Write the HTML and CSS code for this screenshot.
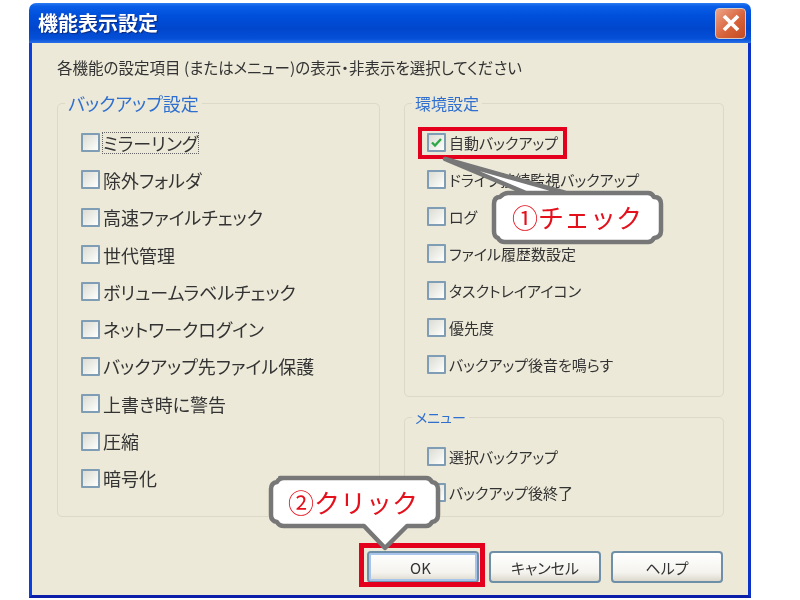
FILE: index.html
```html
<!DOCTYPE html>
<html lang="ja">
<head>
<meta charset="utf-8">
<title>機能表示設定</title>
<link rel="stylesheet" href="styles.css">
</head>
<body>
<div class="page">
  <div class="window">
    <div class="titlebar">
      <span class="title">機能表示設定</span>
      <span class="close"><svg width="20" height="20" viewBox="0 0 20 20"><path d="M3 3L17 17M17 3L3 17" stroke="#fff" stroke-width="3.8" fill="none"/></svg></span>
    </div>
    <div class="content">
      <p class="intro">各機能の設定項目 (またはメニュー)の表示・非表示を選択してください</p>
      <div class="groups">
        <fieldset class="group group-backup">
          <legend>バックアップ設定</legend>
          <div class="row"><span class="box"></span><span class="focus">ミラーリング</span></div>
          <div class="row"><span class="box"></span><span>除外フォルダ</span></div>
          <div class="row"><span class="box"></span><span>高速ファイルチェック</span></div>
          <div class="row"><span class="box"></span><span>世代管理</span></div>
          <div class="row"><span class="box"></span><span>ボリュームラベルチェック</span></div>
          <div class="row"><span class="box"></span><span>ネットワークログイン</span></div>
          <div class="row"><span class="box"></span><span>バックアップ先ファイル保護</span></div>
          <div class="row"><span class="box"></span><span>上書き時に警告</span></div>
          <div class="row"><span class="box"></span><span>圧縮</span></div>
          <div class="row"><span class="box"></span><span>暗号化</span></div>
        </fieldset>
        <div class="side">
          <fieldset class="group group-env">
            <legend>環境設定</legend>
            <div class="row"><span class="box checked"><svg width="15" height="15" viewBox="0 0 15 15"><path d="M3 7.5L6 10.5L12 4" stroke="#2fa84a" stroke-width="2.4" fill="none"/></svg></span><span>自動バックアップ</span></div>
            <div class="row"><span class="box"></span><span>ドライブ接続監視バックアップ</span></div>
            <div class="row"><span class="box"></span><span>ログ</span></div>
            <div class="row"><span class="box"></span><span>ファイル履歴数設定</span></div>
            <div class="row"><span class="box"></span><span>タスクトレイアイコン</span></div>
            <div class="row"><span class="box"></span><span>優先度</span></div>
            <div class="row"><span class="box"></span><span>バックアップ後音を鳴らす</span></div>
          </fieldset>
          <fieldset class="group group-menu">
            <legend>メニュー</legend>
            <div class="row"><span class="box"></span><span>選択バックアップ</span></div>
            <div class="row"><span class="box"></span><span>バックアップ後終了</span></div>
          </fieldset>
        </div>
      </div>
      <div class="buttons">
        <button class="btn btn-default">OK</button>
        <button class="btn">キャンセル</button>
        <button class="btn">ヘルプ</button>
      </div>
    </div>
  </div>
  <div class="mark mark-check"></div>
  <div class="mark mark-ok"></div>
  <svg class="bubbles" width="800" height="600" viewBox="0 0 800 600">
    <path d="M445 159L526 193H648Q652 193 654 197Q661 197 661 204V231Q661 237 654 238Q652 242 648 242H505Q500 242 498 238Q494 237 494 231V204Q494 197 500 197Q504 193 508 193H566L445 159Z" fill="#fff" stroke="#777" stroke-width="4.5" stroke-linejoin="round"/>
    <path d="M280 478H426Q430 478 432 482Q438 483 438 489V515Q438 521 432 522Q430 526 426 526H407L385 548L364 526H284Q279 526 277 522Q271 521 271 515V489Q271 483 277 482Q279 478 284 478Z" fill="#fff" stroke="#777" stroke-width="4.5" stroke-linejoin="round"/>
  </svg>
  <div class="bubble-text bubble-one">①チェック</div>
  <div class="bubble-text bubble-two">②クリック</div>
</div>
</body>
</html>
```
FILE: styles.css
```css
* { box-sizing: border-box; }
html, body { margin: 0; padding: 0; background: #fff; }
body { font-family: "Noto Sans CJK JP", "Liberation Sans", sans-serif; }
.page { position: relative; width: 800px; height: 600px; overflow: hidden; padding: 3px 0 0 29px; }
.window { width: 722px; height: 595px; display: flex; flex-direction: column; filter: blur(0.7px); }
.titlebar {
  height: 40px; flex: none; display: flex; align-items: center; justify-content: space-between;
  padding: 0 5px 0 9px; border-radius: 7px 7px 0 0;
  background: linear-gradient(#2d7cf0 0, #0a5ee8 8%, #0050dc 30%, #0046cc 65%, #0450d8 90%, #2a70e8 100%);
}
.title { color: #fff; font-size: 20px; font-weight: 700; line-height: 26px; text-shadow: 1px 1px 1px #0a2a80; }
.close {
  width: 31px; height: 31px; border-radius: 4px; border: 1px solid #d8c8c0;
  background: linear-gradient(135deg, #eda488, #d8643c 55%, #c24a22);
  display: flex; align-items: center; justify-content: center;
}
.content {
  flex: 1; background: #ece9d8; color: #333;
  border-left: 3px solid #0a3ee0; border-right: 3px solid #0a30c8; border-bottom: 3px solid #0a1ea8;
  padding: 14px 23px 0 25px;
  font-feature-settings: "palt";
}
.intro { margin: 0 0 16px; font-size: 15.5px; line-height: 20px; white-space: nowrap; }
.groups { display: grid; grid-template-columns: 323px 320px; column-gap: 24px; }
.side { display: flex; flex-direction: column; row-gap: 10px; }
.group { margin: 0; min-width: 0; border: 1px solid #dcd9c8; border-radius: 5px; padding: 11px 8px 0 22px; }
legend { margin-left: -15px; padding: 0 3px; line-height: 20px; color: #2f6fd0; }
.row { display: flex; align-items: center; column-gap: 3px; white-space: nowrap; }
.group-backup { height: 424px; padding-left: 23px; }
.group-backup legend { margin-left: -16px; font-size: 18px; }
.group-backup .row { height: 37.3px; font-size: 18px; }
.group-env { height: 304px; }
.group-env legend { font-size: 16px; }
.group-env .row { height: 37px; font-size: 15px; }
.group-menu { height: 110px; }
.group-menu legend { font-size: 14px; }
.group-menu .row { height: 36px; font-size: 15px; }
.box {
  width: 19px; height: 19px; flex: none; display: flex; align-items: center; justify-content: center;
  border: 2px solid #7f9db5; border-radius: 1px;
  background: linear-gradient(135deg, #dcdcd4, #f4f4f0 70%, #fff);
}
.focus { outline: 1px dotted #666; line-height: 20px; }
.buttons { display: flex; justify-content: flex-end; column-gap: 10px; margin-top: 34px; padding-right: 2px; }
.btn {
  width: 112px; height: 32px; padding: 0; font: inherit; font-size: 15px; color: #333;
  font-feature-settings: "palt";
  border: 2px solid #6f8fa8; border-radius: 4px;
  background: linear-gradient(#fff, #f4f3ee 70%, #dcd8cc);
}
.btn-default { box-shadow: inset 0 0 0 2px #a9c4ea; padding-right: 5px; }
.mark { position: absolute; border: 4px solid #e4001c; }
.mark-check { left: 418px; top: 127px; width: 149px; height: 32px; }
.mark-ok { left: 359px; top: 543px; width: 126px; height: 44px; border-width: 5px; }
.bubbles { position: absolute; left: 0; top: 0; filter: blur(0.5px); }
.bubble-text { position: absolute; font-size: 26px; line-height: 36px; color: #e4101c; white-space: nowrap; filter: blur(0.3px); }
.bubble-one { left: 512px; top: 199px; }
.bubble-two { left: 288px; top: 484px; }
```
